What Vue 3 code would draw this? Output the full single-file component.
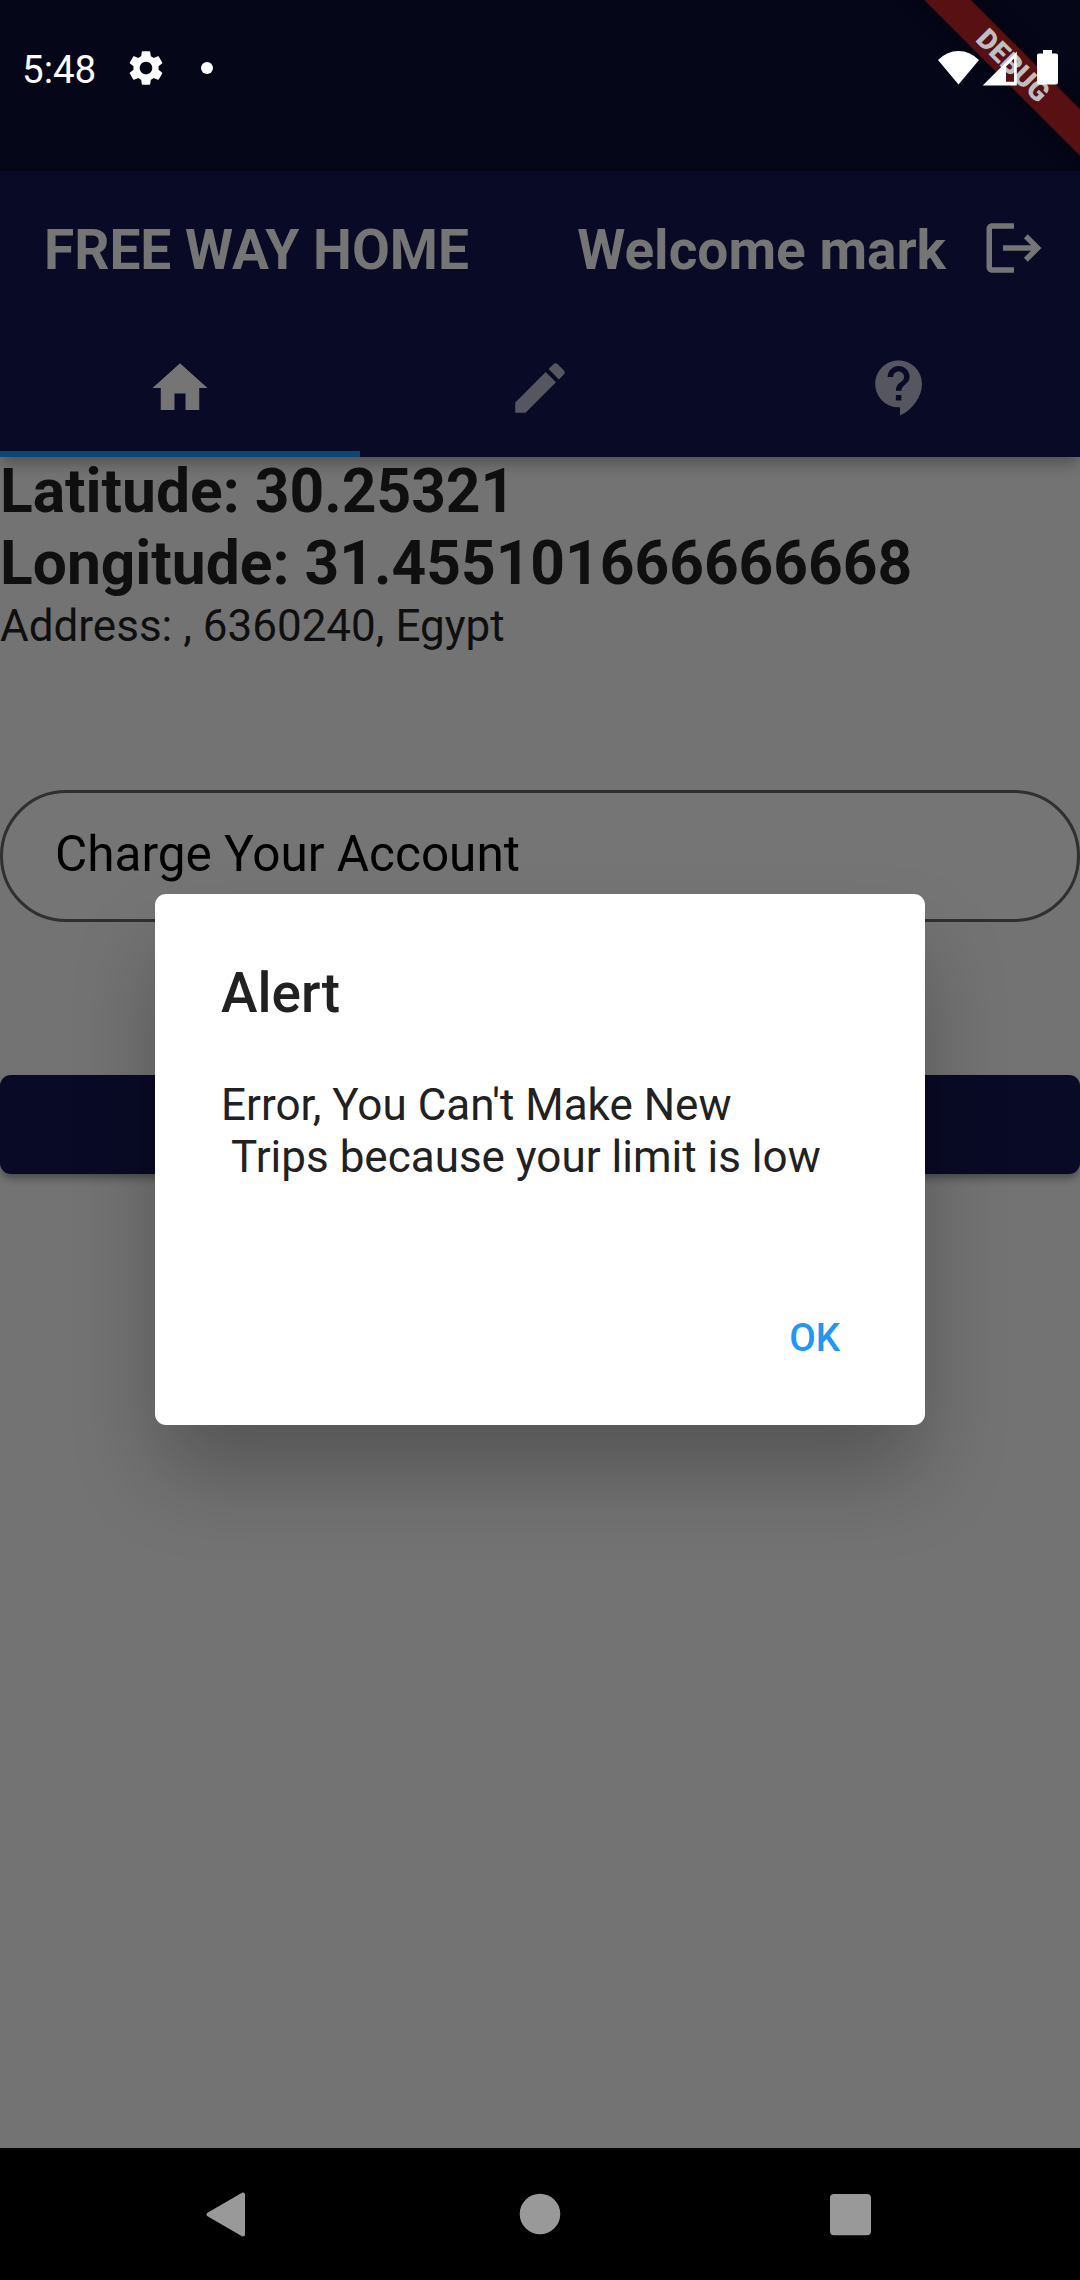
<script setup>
const tabs = [
  { name: 'home', active: true, d: 'M10 20v-6h4v6h5v-8h3L12 3 2 12h3v8z' },
  {
    name: 'edit',
    active: false,
    d: 'M3 17.25V21h3.75L17.81 9.94l-3.75-3.75L3 17.25zM20.71 7.04c.39-.39.39-1.02 0-1.41l-2.34-2.34c-.39-.39-1.02-.39-1.41 0l-1.83 1.83 3.75 3.75 1.83-1.83z'
  },
  {
    name: 'support',
    active: false,
    d: 'M11.5 2C6.81 2 3 5.81 3 10.5S6.81 19 11.5 19h.5v3c4.86-2.34 8-7 8-11.5C20 5.81 16.19 2 11.5 2zm1 14.5h-2v-2h2v2zm0-3.5h-2c0-3.25 3-3 3-5 0-1.1-.9-2-2-2s-2 .9-2 2h-2c0-2.21 1.79-4 4-4s4 1.79 4 4c0 2.5-3 2.75-3 5z'
  }
]
const position = [
  { label: 'Latitude', value: '30.25321' },
  { label: 'Longitude', value: '31.455101666666668' }
]
const address = ', 6360240, Egypt'
const message = "Error, You Can't Make New\n Trips because your limit is low"
</script>

<template>
  <div class="screen">
    <header class="header">
      <div class="status">
        <span class="time">5:48</span>
        <svg class="gear" viewBox="0 0 24 24">
          <path d="M19.14 12.94c.04-.3.06-.61.06-.94 0-.32-.02-.64-.07-.94l2.03-1.58c.18-.14.23-.41.12-.61l-1.92-3.32c-.12-.22-.37-.29-.59-.22l-2.39.96c-.5-.38-1.03-.7-1.62-.94l-.36-2.54c-.04-.24-.24-.41-.48-.41h-3.84c-.24 0-.43.17-.47.41l-.36 2.54c-.59.24-1.13.57-1.62.94l-2.39-.96c-.22-.08-.47 0-.59.22L2.74 8.87c-.12.21-.08.47.12.61l2.03 1.58c-.05.3-.09.63-.09.94s.02.64.07.94l-2.03 1.58c-.18.14-.23.41-.12.61l1.92 3.32c.12.22.37.29.59.22l2.39-.96c.5.38 1.03.7 1.62.94l.36 2.54c.05.24.24.41.48.41h3.84c.24 0 .44-.17.47-.41l.36-2.54c.59-.24 1.13-.56 1.62-.94l2.39.96c.22.08.47 0 .59-.22l1.92-3.32c.12-.22.07-.47-.12-.61l-2.01-1.58zM12 15.6c-1.98 0-3.6-1.62-3.6-3.6s1.62-3.6 3.6-3.6 3.6 1.62 3.6 3.6-1.62 3.6-3.6 3.6z" />
        </svg>
        <span class="dot"></span>
        <svg class="signals" viewBox="0 0 121 36">
          <path d="M0 10A28 28 0 0 1 41 10L20.5 34.5z" />
          <path fill-rule="evenodd" d="M44.7 35.5L78.8 1.5V35.5zM68 16.6V31.8H76V8.6z" />
          <path d="M105 0h9v3.5h4a2 2 0 0 1 2 2V32.5a2 2 0 0 1-2 2h-17a2 2 0 0 1-2-2V5.5a2 2 0 0 1 2-2h4z" />
        </svg>
      </div>
      <div class="appbar">
        <h1 class="title">FREE WAY HOME</h1>
        <span class="title welcome">Welcome mark</span>
        <svg class="icon" viewBox="0 0 24 24">
          <path d="M17 7l-1.41 1.41L18.17 11H8v2h10.17l-2.58 2.58L17 17l5-5zM4 5h8V3H4c-1.1 0-2 .9-2 2v14c0 1.1.9 2 2 2h8v-2H4V5z" />
        </svg>
      </div>
      <nav class="tabs">
        <div v-for="tab in tabs" :key="tab.name" class="tab" :class="{ active: tab.active }">
          <svg class="icon" viewBox="0 0 24 24"><path :d="tab.d" /></svg>
        </div>
      </nav>
      <div class="corner"><div class="ribbon">DEBUG</div></div>
    </header>

    <main class="body">
      <p v-for="row in position" :key="row.label" class="coord">{{ row.label }}: {{ row.value }}</p>
      <p class="address">Address: {{ address }}</p>
      <div class="field">Charge Your Account</div>
      <div class="submit"></div>
    </main>

    <section class="dialog">
      <h2 class="dialog-title">Alert</h2>
      <p class="dialog-text">{{ message }}</p>
      <span class="ok">OK</span>
    </section>

    <footer class="navbar">
      <svg viewBox="0 0 66 66"><path d="M12.5 33.5L47 13.5V53.5z" stroke="#999" stroke-width="4" stroke-linejoin="round" /></svg>
      <svg viewBox="0 0 66 66"><circle cx="33" cy="33" r="20.3" /></svg>
      <svg viewBox="0 0 66 66"><rect x="12" y="13" width="41" height="41.3" rx="4" /></svg>
    </footer>
  </div>
</template>

<style>
body {
  margin: 0;
  background: #737373;
}
</style>

<style scoped>
.screen {
  position: relative;
  display: flex;
  flex-direction: column;
  width: 1080px;
  height: 2280px;
  overflow: hidden;
  background: #737373;
  font-family: Roboto, sans-serif;
}
h1, h2, p {
  margin: 0;
}
.header {
  position: relative;
  z-index: 1;
  flex: none;
  height: 457px;
  background: #090a25;
  box-shadow: 0 8px 14px -2px rgba(0, 0, 0, 0.3);
}
.status {
  box-sizing: border-box;
  display: flex;
  align-items: center;
  height: 171px;
  padding: 45px 21px 81px 22px;
  background: #050617;
  color: #fff;
  fill: #fff;
}
.status > * {
  position: relative;
  z-index: 2;
}
.time {
  margin-top: 4px;
  font-size: 38.5px;
  line-height: 45px;
}
.gear {
  width: 42px;
  height: 42px;
  margin-left: 29px;
}
.dot {
  width: 12px;
  height: 12px;
  margin-left: 34px;
  border-radius: 50%;
  background: #fff;
}
.signals {
  width: 121px;
  height: 36px;
  margin-left: auto;
}
.appbar {
  box-sizing: border-box;
  display: flex;
  align-items: center;
  height: 154px;
  padding: 0 33px 0 44px;
}
.icon {
  width: 66px;
  height: 66px;
  fill: #757575;
}
.title {
  padding-top: 3px;
  color: #757575;
  font-size: 55px;
  font-weight: 700;
  line-height: 64px;
}
.welcome {
  margin-left: auto;
  margin-right: 35px;
}
.tabs {
  display: flex;
  height: 132px;
}
.tab {
  box-sizing: border-box;
  display: flex;
  flex: 1;
  align-items: center;
  justify-content: center;
  border-bottom: 6px solid transparent;
}
.tab .icon {
  fill: #55565f;
}
.tab.active {
  border-color: #0f4570;
}
.tab.active .icon {
  fill: #757575;
}
.corner {
  position: absolute;
  top: 0;
  right: 0;
  width: 220px;
  height: 171px;
  overflow: hidden;
}
.ribbon {
  position: absolute;
  top: 49px;
  left: 3px;
  width: 300px;
  height: 33px;
  background: #581013;
  box-shadow: 0 0 16px rgba(0, 0, 0, 0.5);
  color: #bfbfbf;
  font-size: 28px;
  font-weight: 900;
  line-height: 33px;
  text-align: center;
  transform: rotate(45deg);
}
.body {
  flex: 1;
}
.coord {
  color: #0f0f0f;
  font-size: 60.5px;
  font-weight: 700;
  line-height: 72px;
}
.coord:first-child {
  margin-top: -1px;
}
.address {
  color: #0f0f0f;
  font-size: 44px;
  line-height: 52px;
}
.field {
  box-sizing: border-box;
  height: 132px;
  margin-top: 138px;
  padding: 32px 52px;
  border: 3px solid #303030;
  border-radius: 66px;
  background: #757575;
  color: #000;
  font-size: 49.5px;
  line-height: 58px;
}
.submit {
  height: 99px;
  margin-top: 153px;
  border-radius: 11px;
  background: #090a25;
  box-shadow: 0 5px 8px -1px rgba(0, 0, 0, 0.38);
}
.dialog {
  position: absolute;
  z-index: 3;
  top: 894px;
  left: 155px;
  box-sizing: border-box;
  display: flex;
  flex-direction: column;
  width: 770px;
  height: 531px;
  padding: 66px 66px 65px;
  border-radius: 11px;
  background: #fff;
  box-shadow: 0 52px 86px -6px rgba(0, 0, 0, 0.27);
  color: #212121;
}
.dialog-title {
  font-size: 55px;
  font-weight: 500;
  line-height: 66px;
}
.dialog-text {
  margin-top: 53px;
  font-size: 44px;
  line-height: 52px;
  white-space: pre;
}
.ok {
  margin-top: auto;
  margin-right: 19px;
  align-self: flex-end;
  color: #2196f3;
  font-size: 38.5px;
  font-weight: 500;
  line-height: 44px;
}
.navbar {
  display: flex;
  flex: none;
  align-items: center;
  justify-content: center;
  gap: 245px;
  height: 132px;
  background: #000;
}
.navbar svg {
  width: 66px;
  height: 66px;
  fill: #999;
}
</style>
